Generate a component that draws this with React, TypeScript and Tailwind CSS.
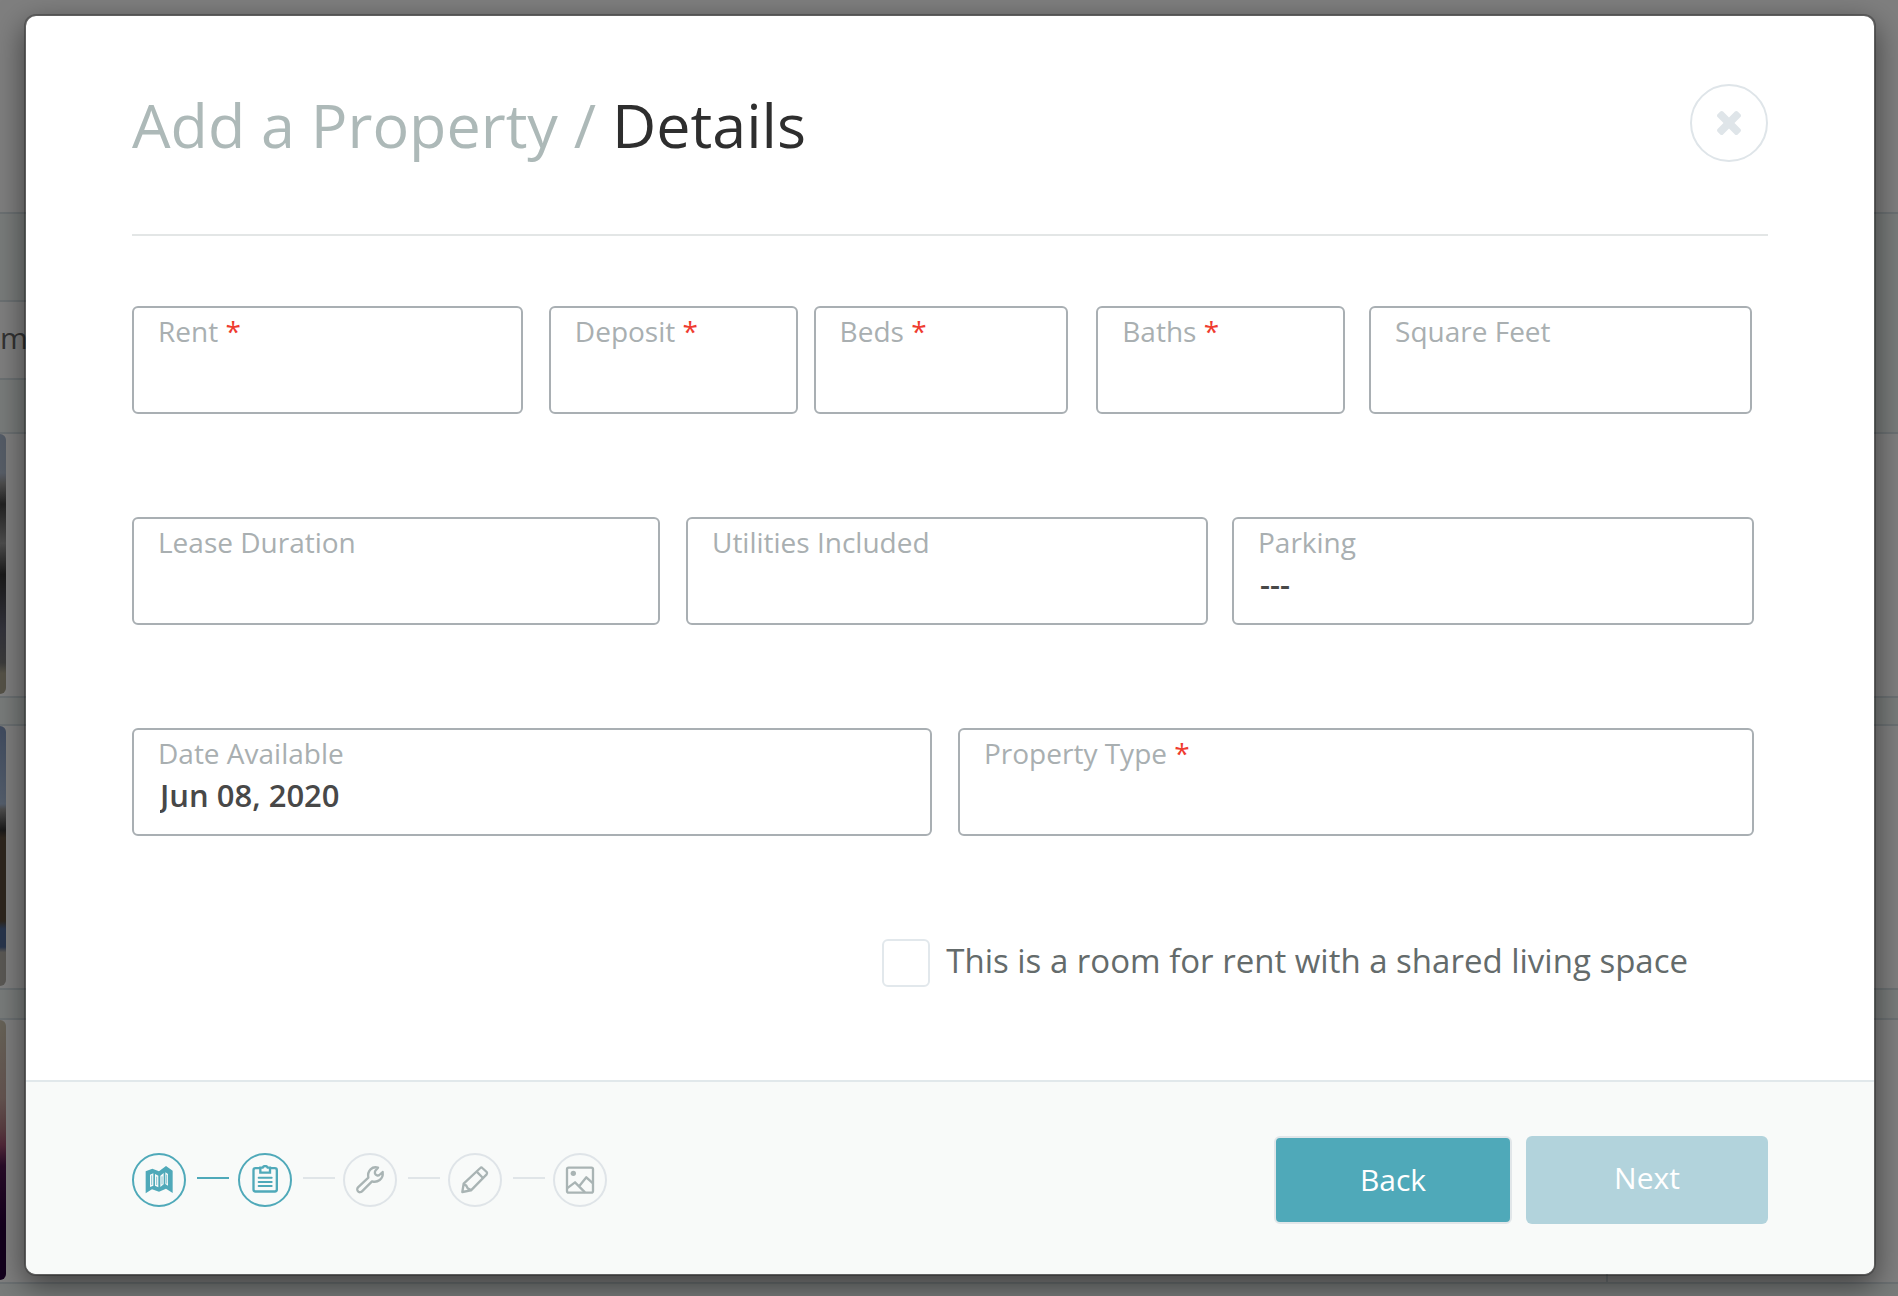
import React, { useState } from 'react';

interface FieldProps {
  id: string;
  label: string;
  className: string;
  required?: boolean;
  defaultValue?: string;
  options?: string[];
}

const Field: React.FC<FieldProps> = ({ id, label, className, required, defaultValue, options }) => {
  const control =
    'block w-full appearance-none bg-transparent px-[26px] text-[31px] leading-[44px] font-semibold text-[#484848] outline-none';

  return (
    <div className={`min-w-0 rounded-md border-2 border-[#a9afb3] pb-[17px] ${className}`}>
      <label htmlFor={id} className="block px-6 pt-[3px] text-[28px] leading-[40px] text-[#a9afb1]">
        {label}
        {required && <span className="text-[#ef3b2f]"> *</span>}
      </label>
      {options ? (
        <select id={id} className={control} defaultValue={defaultValue}>
          {options.map((option) => (
            <option key={option}>{option}</option>
          ))}
        </select>
      ) : (
        <input id={id} type="text" className={control} defaultValue={defaultValue} required={required} />
      )}
    </div>
  );
};

const MapIcon = () => (
  <svg viewBox="0 0 90 90" className="size-[30px]">
    <path d="M5 19L25 11L45 19L66 3L86 17V84L66 71L45 80L24 73L5 85Z" fill="currentColor" />
    <path
      d="M18 29L28 25V62L18 66ZM33 27L43 32V67L33 62ZM49 32L59 24V58L49 66ZM64 22L72 27V62L64 57Z"
      fill="#f8faf9"
    />
    <path d="M23 31V60M38 35V60M54 34V58M68 29V56" stroke="currentColor" strokeWidth="2" />
  </svg>
);

const ClipboardIcon = () => (
  <svg viewBox="0 0 90 90" className="size-[30px]" fill="none" stroke="currentColor" strokeWidth="7">
    <rect x="10.5" y="9.5" width="70" height="70" rx="6" />
    <path d="M31 23V8H38Q40 3 45.5 3T53 8H60V23Z" fill="#f8faf9" />
    <path d="M26 38H65M26 51H65M26 63H65" strokeLinecap="round" strokeWidth="6" />
  </svg>
);

const WrenchIcon = () => (
  <svg viewBox="0 0 90 90" className="size-[30px]" fill="none" stroke="currentColor" strokeWidth="7" strokeLinejoin="round">
    <path d="M69 8C52 3 36 16 40 38L9 67C6 70 6 76 9 79C12 83 18 82 21 79L51 49C67 54 86 43 83 21L73 30C69 33 62 31 60 26C59 22 60 19 61 17Z" />
  </svg>
);

const PencilIcon = () => (
  <svg viewBox="0 0 90 90" className="size-[30px]" fill="none" stroke="currentColor" strokeWidth="7" strokeLinejoin="round">
    <path d="M7 81L11 56L61 9Q64 6 67 9L80 21Q83 25 80 28L33 76Z" />
    <path d="M50 20L69 39M11 58L19 62L23 70L33 75" />
  </svg>
);

const PictureIcon = () => (
  <svg viewBox="0 0 90 90" className="size-[30px]" fill="none" stroke="currentColor" strokeWidth="7" strokeLinejoin="round">
    <rect x="6" y="8" width="78" height="75" rx="5" />
    <circle cx="25" cy="25" r="8" fill="currentColor" stroke="none" />
    <path d="M6 70L30 52L60 82M43 63L64 37L84 55" />
  </svg>
);

const steps = [
  { name: 'Location', icon: MapIcon, done: true },
  { name: 'Details', icon: ClipboardIcon, done: true },
  { name: 'Amenities', icon: WrenchIcon, done: false },
  { name: 'Description', icon: PencilIcon, done: false },
  { name: 'Photos', icon: PictureIcon, done: false },
];

const Stepper = () => (
  <ol className="flex items-center">
    {steps.map(({ name, icon: Icon, done }, i) => (
      <li key={name} className="flex items-center">
        {i > 0 && (
          <span className={`mb-1 ml-[11px] h-0.5 w-8 ${done ? 'mr-[9px] bg-[#4fa9b9]' : 'mr-2 bg-[#e0e5e8]'}`} />
        )}
        <span
          aria-label={name}
          className={`flex size-[54px] items-center justify-center rounded-full border-2 ${
            done ? 'border-[#4fa9b9] text-[#4fa9b9]' : 'border-[#dfe4e8] text-[#a9b4b4]'
          }`}
        >
          <Icon />
        </span>
      </li>
    ))}
  </ol>
);

const ListingPhoto = ({ className }: { className: string }) => (
  <div className="flex h-[264px] justify-between border-b-2 border-[#d8e2e6] bg-white">
    <div className={`h-[260px] w-1.5 rounded-r-md ${className}`} />
    <div className="w-[292px] border-l-2 border-[#d8e2e6]" />
  </div>
);

// Listings page that sits dimmed behind the dialog
const Backdrop = () => (
  <div aria-hidden="true" className="absolute inset-0 overflow-hidden bg-[#f3f8f6]">
    <div className="h-[214px] border-b-2 border-[#d8e2e6] bg-white" />
    <div className="h-[220px] border-b-2 border-[#d8e2e6] pt-[86px]">
      <div className="h-20 w-3/4 border-y-2 border-[#d8e2e6] bg-white pt-3 text-[30px] leading-[48px] text-[#666]">
        m
      </div>
    </div>
    <ListingPhoto className="bg-[linear-gradient(#a8b8cf_0%,#b0bccf_15%,#999_19%,#444_27%,#999_42%,#333_54%,#667_75%,#777_88%,#aaa58e_92%)]" />
    <div className="h-7 border-b-2 border-[#d8e2e6]" />
    <ListingPhoto className="bg-[linear-gradient(#8298c0_0%,#a8bcd8_30%,#999_32%,#333_40%,#5c4d3c_43%,#5c4d3c_75%,#506a98_78%,#506a98_85%,#b5b0a8_87%)]" />
    <div className="h-[30px] border-b-2 border-[#d8e2e6]" />
    <ListingPhoto className="bg-[linear-gradient(#cfc6b0_0%,#c8a8a0_30%,#b07880_42%,#a05070_48%,#501850_56%,#26003a_80%)]" />
    <div className="absolute inset-0 bg-black/50" />
  </div>
);

const App: React.FC = () => {
  const [shared, setShared] = useState(false);

  return (
    <div className="relative min-h-screen font-['Open_Sans',sans-serif]">
      <Backdrop />
      <div className="relative pt-[14px] pr-[22px] pb-5 pl-6">
        <div
          role="dialog"
          aria-labelledby="dialog-title"
          className="overflow-hidden rounded-xl border-2 border-black/25 bg-white bg-clip-padding shadow-[0_10px_30px_rgba(0,0,0,0.5)]"
        >
          <form onSubmit={(e) => e.preventDefault()}>
            <div className="px-[106px]">
              <header className="flex items-start justify-between border-b-2 border-[#e3e6e6] pt-[68px] pb-[68px]">
                <h1 id="dialog-title" className="text-[61px] leading-[82px] text-[#2e2e2e]">
                  <span className="text-[#adb9b8]">Add a Property /</span> Details
                </h1>
                <button
                  type="button"
                  aria-label="Close"
                  className="flex size-[78px] items-center justify-center rounded-full border-2 border-[#dfe5e9] text-[#dfe5e9]"
                >
                  <svg viewBox="302 366 1188 1188" className="size-6" fill="currentColor">
                    <path d="M1490 1322q0 40-28 68l-136 136q-28 28-68 28t-68-28l-294-294-294 294q-28 28-68 28t-68-28l-136-136q-28-28-28-68t28-68l294-294-294-294q-28-28-28-68t28-68l136-136q28-28 68-28t68 28l294 294 294-294q28-28 68-28t68 28l136 136q28 28 28 68t-28 68l-294 294 294 294q28 28 28 68z" />
                  </svg>
                </button>
              </header>

              <div className="flex flex-col gap-[103px] pt-[70px] pr-[14px]">
                <div className="flex pr-0.5">
                  <Field id="rent" label="Rent" required className="mr-[26px] flex-[392]" />
                  <Field id="deposit" label="Deposit" required className="mr-4 flex-[248]" />
                  <Field id="beds" label="Beds" required className="mr-7 flex-[254]" />
                  <Field id="baths" label="Baths" required className="mr-6 flex-[248]" />
                  <Field id="sqft" label="Square Feet" className="flex-[384]" />
                </div>
                <div className="flex">
                  <Field id="lease" label="Lease Duration" className="mr-[26px] flex-[528]" />
                  <Field id="utilities" label="Utilities Included" className="mr-6 flex-[522]" />
                  <Field
                    id="parking"
                    label="Parking"
                    className="flex-[522]"
                    defaultValue="---"
                    options={['---', 'Garage', 'Street']}
                  />
                </div>
                <div className="flex">
                  <Field
                    id="date"
                    label="Date Available"
                    className="mr-[26px] flex-[800]"
                    defaultValue="Jun 08, 2020"
                  />
                  <Field id="type" label="Property Type" required className="flex-[796]" />
                </div>
                <div className="flex items-center justify-end pr-[66px] pb-[93px]">
                  <input
                    id="shared"
                    type="checkbox"
                    checked={shared}
                    onChange={(e) => setShared(e.target.checked)}
                    className="mr-4 size-12 appearance-none rounded-md border-2 border-[#e2e8ec] checked:bg-[#4fa9b9]"
                  />
                  <label htmlFor="shared" className="pb-1 text-[33px] leading-[44px] text-[#646b6b]">
                    This is a room for rent with a shared living space
                  </label>
                </div>
              </div>
            </div>

            <footer className="flex items-center justify-between border-t-2 border-[#e1e8eb] bg-[#f8faf9] px-[106px] pt-[54px] pb-[50px]">
              <Stepper />
              <div className="flex gap-[14px] text-[30px] leading-[40px] text-white">
                <button type="button" className="h-[88px] w-[238px] rounded-md border-2 border-[#e1e6e9] bg-[#4fa9b9]">
                  Back
                </button>
                <button type="submit" className="h-[88px] w-[242px] rounded-md bg-[#b2d3dc] pb-1">
                  Next
                </button>
              </div>
            </footer>
          </form>
        </div>
      </div>
    </div>
  );
};

export default App;
